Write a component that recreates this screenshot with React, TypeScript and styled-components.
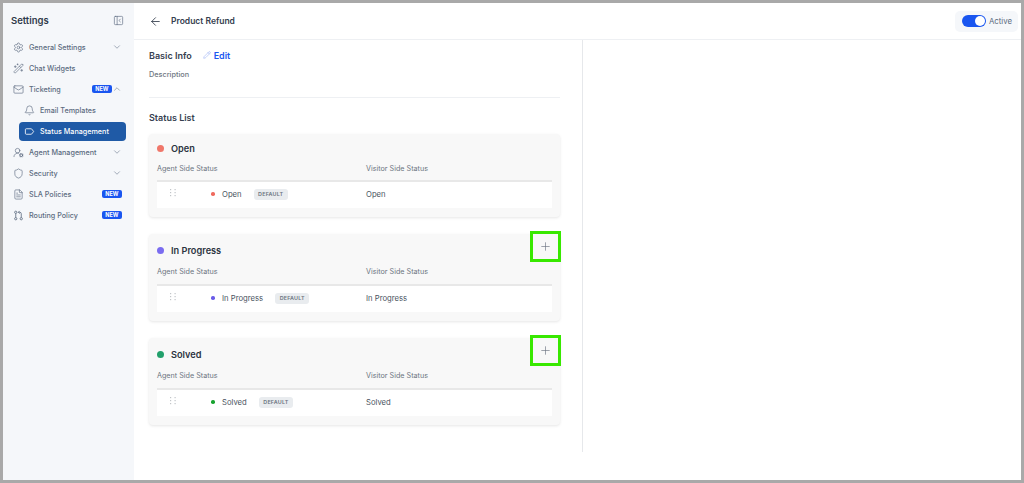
import React from "react"
import styled, { createGlobalStyle } from "styled-components"
import {
  ArrowLeft,
  Bell,
  ChevronDown,
  ChevronUp,
  FileText,
  Mail,
  PanelLeftClose,
  Pencil,
  Plus,
  Settings,
  Shield,
  UserRoundCog,
  WandSparkles,
} from "lucide-react"

const GlobalStyle = createGlobalStyle`
  html, body {
    margin: 0;
    padding: 0;
    background: #fff;
  }
  * {
    box-sizing: border-box;
  }
  body {
    font-family: Inter, "Liberation Sans", sans-serif;
  }
`

const Frame = styled.div`
  width: 1024px;
  height: 483px;
  border: 3px solid #a9a9a9;
  display: flex;
  overflow: hidden;
  background: #fff;
`

const Sidebar = styled.aside`
  width: 131px;
  flex: none;
  background: #f5f7fa;
  padding: 11px 8px 0 8px;
`

const SidebarHead = styled.div`
  display: flex;
  align-items: center;
  justify-content: space-between;
  height: 13px;
  padding-right: 2px;
  margin-bottom: 9.5px;
  font-size: 9.5px;
  font-weight: 600;
  color: #2f3a4a;
  svg {
    color: #5c6b80;
  }
`

const NavRow = styled.div<{ $sub?: boolean; $active?: boolean }>`
  display: flex;
  align-items: center;
  height: ${(p) => (p.$active ? "19px" : "21px")};
  margin-top: ${(p) => (p.$active ? "1.5px" : "0")};
  margin-bottom: ${(p) => (p.$active ? "0.5px" : "0")};
  margin-left: ${(p) => (p.$sub ? "8px" : "0")};
  padding-left: ${(p) => (p.$sub ? "5px" : "2px")};
  padding-right: 4px;
  gap: 5px;
  font-size: 7.2px;
  font-weight: 500;
  color: ${(p) => (p.$active ? "#fff" : "#5c6b80")};
  background: ${(p) => (p.$active ? "#1f5aa6" : "transparent")};
  border-radius: 4px;
  svg {
    flex: none;
  }
`

const NavLabel = styled.span`
  flex: 1;
  white-space: nowrap;
`

const NewBadge = styled.span`
  background: #1a56f0;
  color: #fff;
  font-size: 5.5px;
  font-weight: 700;
  line-height: 8px;
  padding: 0 3.5px;
  border-radius: 2px;
  height: 8px;
  & + svg {
    margin-left: -5px;
  }
`

const Main = styled.main`
  flex: 1;
  min-width: 0;
  display: flex;
  flex-direction: column;
`

const TopBar = styled.header`
  height: 37px;
  flex: none;
  display: flex;
  align-items: center;
  border-bottom: 1px solid #eef0f3;
  padding: 0 3px 0 15px;
  gap: 9px;
  color: #36404f;
`

const PageTitle = styled.h1`
  flex: 1;
  margin: 0;
  font-size: 8.5px;
  font-weight: 600;
  color: #36404f;
`

const ActivePill = styled.div`
  display: flex;
  align-items: center;
  gap: 3px;
  height: 21px;
  padding: 0 6px 0 7px;
  background: #f5f7fa;
  border-radius: 5px;
  font-size: 7.8px;
  color: #5c6b80;
`

const Toggle = styled.span`
  display: flex;
  justify-content: flex-end;
  align-items: center;
  width: 24px;
  height: 12px;
  padding: 1px;
  border-radius: 6px;
  background: #1a56f0;
  &::after {
    content: "";
    width: 10px;
    height: 10px;
    border-radius: 50%;
    background: #fff;
  }
`

const Content = styled.div`
  width: 449px;
  height: 412px;
  flex: none;
  border-right: 1px solid #e6e8eb;
  padding: 9px 22px 0 15px;
`

const InfoRow = styled.div`
  display: flex;
  align-items: center;
  height: 12px;
  gap: 11px;
  font-size: 9px;
  font-weight: 600;
  color: #36404f;
`

const EditLink = styled.span`
  display: flex;
  align-items: center;
  gap: 3px;
  color: #1a56f0;
  font-size: 9px;
  svg {
    color: #6f8ff0;
  }
`

const Description = styled.p`
  margin: 9px 0 0;
  font-size: 7.3px;
  font-weight: 500;
  line-height: 10px;
  color: #6f7782;
`

const Divider = styled.hr`
  margin: 17px 0 0;
  border: 0;
  border-top: 1px solid #eef0f3;
`

const SectionTitle = styled.h2`
  margin: 14px 0 10px;
  font-size: 9px;
  line-height: 12px;
  font-weight: 600;
  color: #36404f;
`

const CardList = styled.div`
  display: flex;
  flex-direction: column;
  gap: 17px;
`

const Card = styled.section<{ $tall?: boolean }>`
  position: relative;
  height: ${(p) => (p.$tall ? "87px" : "83px")};
  background: #f8f8f8;
  border-radius: 4px;
  box-shadow: 0 1px 3px rgba(0, 0, 0, 0.1);
  padding: 0 8px;
`

const CardHead = styled.div<{ $tall?: boolean }>`
  display: flex;
  align-items: center;
  gap: 7px;
  height: ${(p) => (p.$tall ? "32px" : "28px")};
  font-size: 9.2px;
  font-weight: 600;
  color: #2b3340;
`

const Dot = styled.span<{ $color: string; $size: number }>`
  width: ${(p) => p.$size}px;
  height: ${(p) => p.$size}px;
  border-radius: 50%;
  background: ${(p) => p.$color};
  flex: none;
`

const Columns = styled.div`
  display: grid;
  grid-template-columns: 209px 1fr;
  align-items: center;
`

const ColumnHead = styled(Columns)<{ $tall?: boolean }>`
  height: 18px;
  padding-bottom: ${(p) => (p.$tall ? "8px" : "6px")};
  font-size: 7.2px;
  color: #6b7480;
`

const StatusRow = styled(Columns)`
  height: 28px;
  padding-bottom: 2px;
  background: #fff;
  border-top: 2px solid #e8e8e8;
  font-size: 7.7px;
  color: #4a5361;
`

const StatusCell = styled.div`
  display: flex;
  align-items: center;
  position: relative;
  padding-left: 54px;
  gap: 7.5px;
`

const Grip = styled.svg`
  position: absolute;
  left: 13px;
  top: 0;
  color: #c2c5c9;
`

const DefaultTag = styled.span`
  margin-left: 4.5px;
  background: #e9ecef;
  color: #6b7480;
  font-size: 5.4px;
  font-weight: 600;
  letter-spacing: 0.2px;
  line-height: 11px;
  padding: 0 4.5px;
  border-radius: 3px;
`

const AddMarker = styled.div`
  position: absolute;
  top: -3px;
  right: -1px;
  width: 31px;
  height: 31px;
  border: 3px solid #38e800;
  display: flex;
  align-items: center;
  justify-content: center;
  color: #6b7280;
`

function TagIcon() {
  return (
    <svg width="11" height="11" viewBox="0 0 24 24" fill="none" stroke="currentColor" strokeWidth="1.8">
      <path d="M3 8a2 2 0 0 1 2-2h10.5a2 2 0 0 1 1.5.7l4 5.3-4 5.3a2 2 0 0 1-1.5.7H5a2 2 0 0 1-2-2z" />
    </svg>
  )
}

function RoutingIcon() {
  return (
    <svg width="11" height="11" viewBox="0 0 24 24" fill="none" stroke="currentColor" strokeWidth="1.8">
      <circle cx="6" cy="5" r="2.5" />
      <circle cx="6" cy="19" r="2.5" />
      <circle cx="18" cy="19" r="2.5" />
      <path d="M6 7.5v9" />
      <path d="M18 16.5V8a3 3 0 0 0-3-3h-3" />
      <path d="M14.5 2 11.5 5l3 3" />
    </svg>
  )
}

const navTop = [
  { icon: <Settings size={11} strokeWidth={1.4} />, label: "General Settings", arrow: "down" },
  { icon: <WandSparkles size={11} strokeWidth={1.4} />, label: "Chat Widgets" },
  { icon: <Mail size={11} strokeWidth={1.4} />, label: "Ticketing", isNew: true, arrow: "up" },
]

const navBottom = [
  { icon: <UserRoundCog size={11} strokeWidth={1.4} />, label: "Agent Management", arrow: "down" },
  { icon: <Shield size={11} strokeWidth={1.4} />, label: "Security", arrow: "down" },
  { icon: <FileText size={11} strokeWidth={1.4} />, label: "SLA Policies", isNew: true },
  { icon: <RoutingIcon />, label: "Routing Policy", isNew: true },
]

const statuses = [
  { name: "Open", color: "#f0776a", small: "#ef6a5e", canAdd: false },
  { name: "In Progress", color: "#7a6cf0", small: "#6a5ce8", canAdd: true },
  { name: "Solved", color: "#22a06b", small: "#18a330", canAdd: true },
]

type NavItem = {
  icon: React.ReactNode
  label: string
  isNew?: boolean
  arrow?: string
}

function NavEntry({ item }: { item: NavItem }) {
  return (
    <NavRow>
      {item.icon}
      <NavLabel>{item.label}</NavLabel>
      {item.isNew && <NewBadge>NEW</NewBadge>}
      {item.arrow === "down" && <ChevronDown size={10} strokeWidth={1.3} />}
      {item.arrow === "up" && <ChevronUp size={10} strokeWidth={1.3} />}
    </NavRow>
  )
}

function App(): React.JSX.Element {
  return (
    <Frame>
      <GlobalStyle />
      <Sidebar>
        <SidebarHead>
          Settings
          <PanelLeftClose size={11} strokeWidth={1.4} />
        </SidebarHead>
        {navTop.map((item) => (
          <NavEntry key={item.label} item={item} />
        ))}
        <NavRow $sub>
          <Bell size={11} strokeWidth={1.4} />
          <NavLabel>Email Templates</NavLabel>
        </NavRow>
        <NavRow $sub $active>
          <TagIcon />
          <NavLabel>Status Management</NavLabel>
        </NavRow>
        {navBottom.map((item) => (
          <NavEntry key={item.label} item={item} />
        ))}
      </Sidebar>
      <Main>
        <TopBar>
          <ArrowLeft size={13} strokeWidth={1.6} />
          <PageTitle>Product Refund</PageTitle>
          <ActivePill>
            <Toggle />
            Active
          </ActivePill>
        </TopBar>
        <Content>
          <InfoRow>
            Basic Info
            <EditLink>
              <Pencil size={8} strokeWidth={1.2} />
              Edit
            </EditLink>
          </InfoRow>
          <Description>Description</Description>
          <Divider />
          <SectionTitle>Status List</SectionTitle>
          <CardList>
            {statuses.map((s) => (
              <Card key={s.name} $tall={s.canAdd}>
                <CardHead $tall={s.canAdd}>
                  <Dot $color={s.color} $size={7} />
                  {s.name}
                </CardHead>
                <ColumnHead $tall={s.canAdd}>
                  <span>Agent Side Status</span>
                  <span>Visitor Side Status</span>
                </ColumnHead>
                <StatusRow>
                  <StatusCell>
                    <Grip width="7" height="8" viewBox="0 0 7 8" fill="currentColor">
                      <rect x="0" y="0" width="1.2" height="1.2" />
                      <rect x="4.5" y="0" width="1.2" height="1.2" />
                      <rect x="0" y="3" width="1.2" height="1.2" />
                      <rect x="4.5" y="3" width="1.2" height="1.2" />
                      <rect x="0" y="6" width="1.2" height="1.2" />
                      <rect x="4.5" y="6" width="1.2" height="1.2" />
                    </Grip>
                    <Dot $color={s.small} $size={3.5} />
                    {s.name}
                    <DefaultTag>DEFAULT</DefaultTag>
                  </StatusCell>
                  <span>{s.name}</span>
                </StatusRow>
                {s.canAdd && (
                  <AddMarker>
                    <Plus size={13} strokeWidth={1.2} />
                  </AddMarker>
                )}
              </Card>
            ))}
          </CardList>
        </Content>
      </Main>
    </Frame>
  )
}

export default App
